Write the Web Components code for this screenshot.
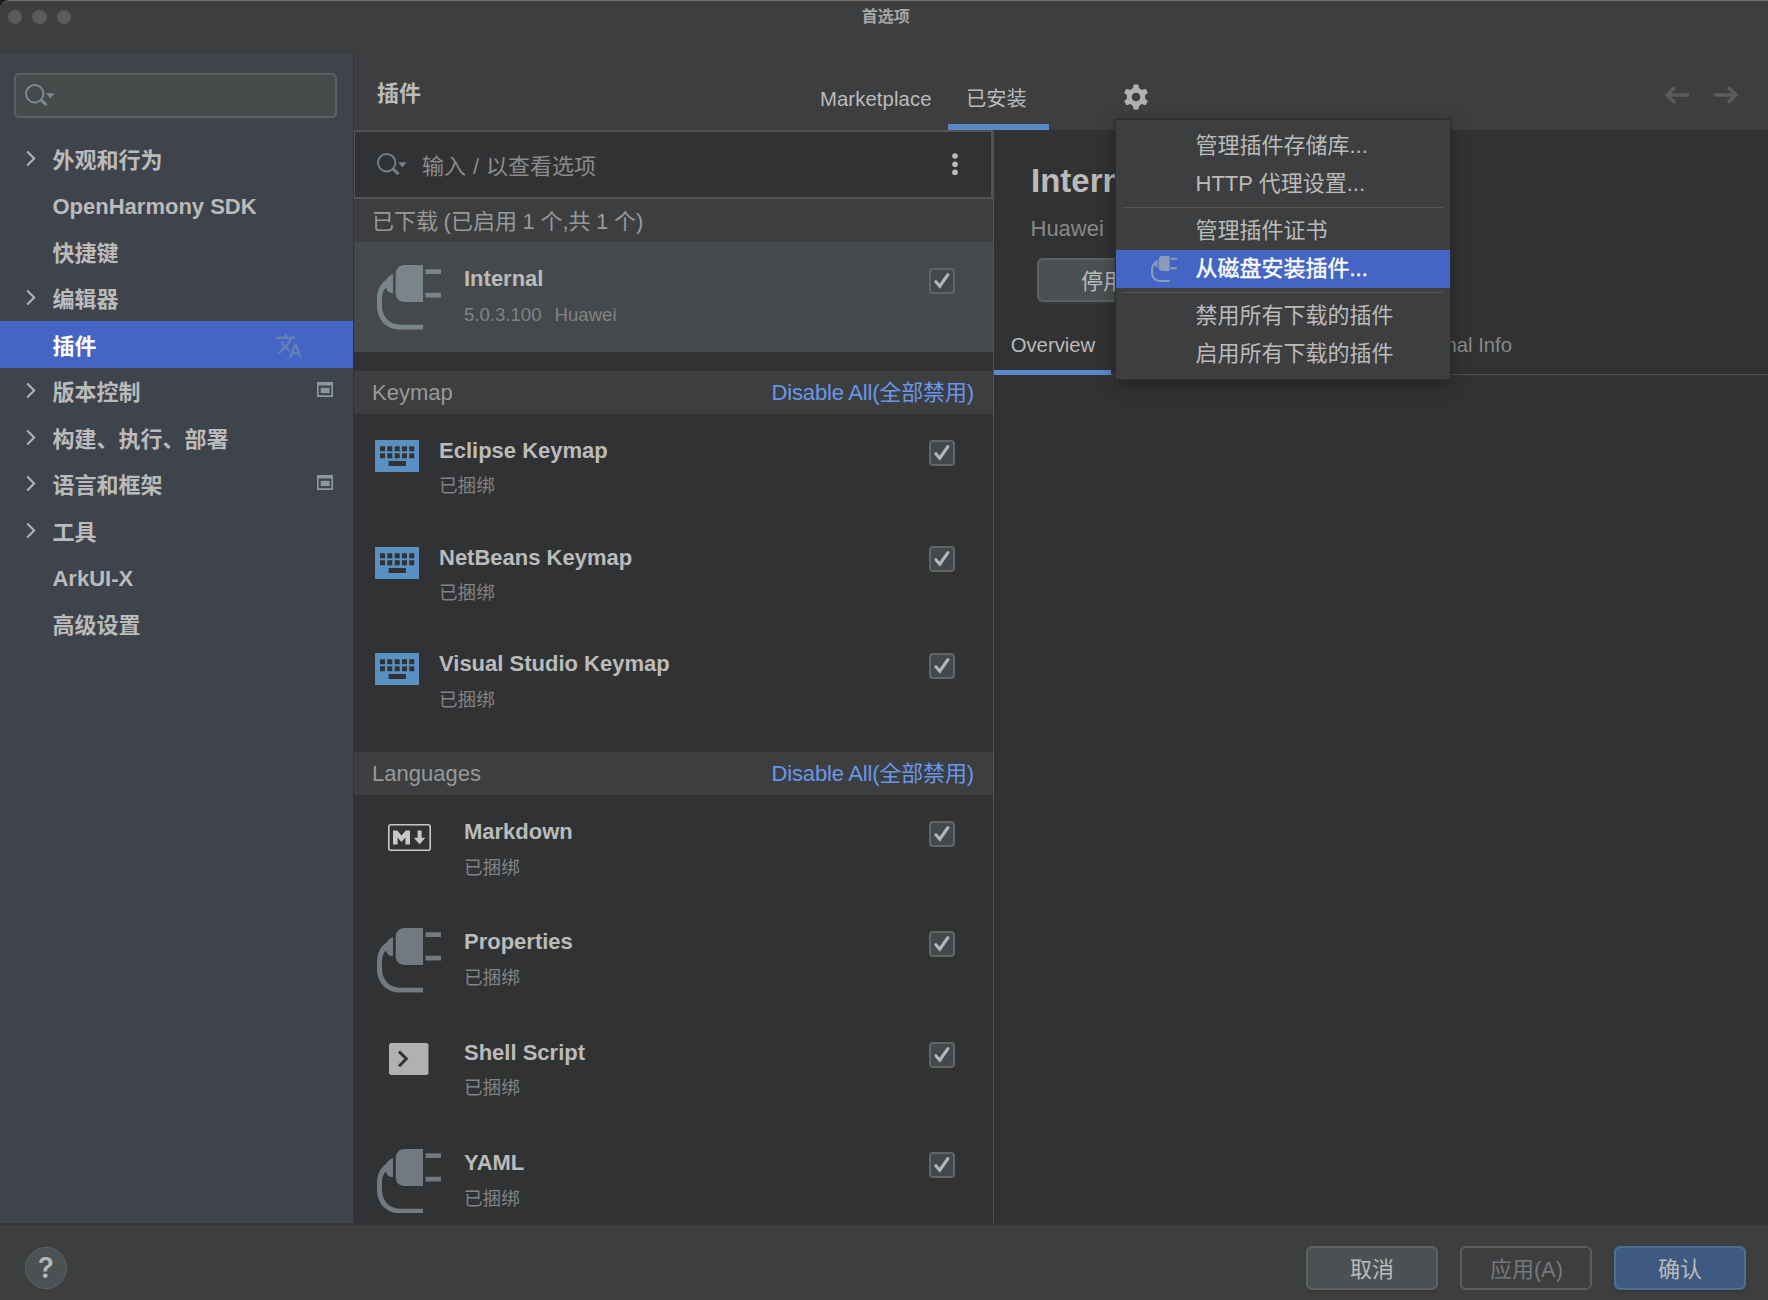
<!DOCTYPE html>
<html lang="zh-CN">
<head>
<meta charset="utf-8">
<title>首选项</title>
<style>
html,body{margin:0;padding:0;background:#1b1c1d}
body{width:1768px;height:1300px;overflow:hidden;font-family:"Liberation Sans","Noto Sans CJK SC",sans-serif;font-size:22px;color:#bbbbbb}
</style>
</head>
<body>
<prefs-window></prefs-window>
<script>
const define = (name, html) => {
  const t = document.createElement('template');
  t.innerHTML = html;
  customElements.define(name, class extends HTMLElement {
    constructor() {
      super();
      this.attachShadow({mode: 'open'}).appendChild(t.content.cloneNode(true));
    }
  });
};

/* ---------- icons ---------- */
const ICONS = {
  plug: ['0 0 64.5 64.5', '<path fill="currentColor" d="M27.700 0H46V37H27.700C22 37 18.700 33 18.700 28V9C18.700 4 22 0 27.700 0ZM48.500 4.200h16v4.800h-16ZM48.500 27.800h16v4.800h-16ZM16 9V28C12 28 9.500 26 9 22.500C6 25 5 29 5 34V41C5 52 13 59.700 23 59.700H46V64.500H23C9 64.500 0 54 0 41V34C0 25 4 18 9 15C11 12 13 10 16 9Z"/>'],
  keyboard: ['0 0 44.500 32', '<path fill="#5992c2" d="M0 0h44.500v32H0z"/><g fill="#313234"><path d="M5 6.300h5v5h-5zM12.300 6.300h5v5h-5zM19.700 6.300h5v5h-5zM27 6.300h5v5h-5zM34.300 6.300h5v5h-5zM5 13.300h5v5h-5zM12.300 13.300h5v5h-5zM19.700 13.300h5v5h-5zM27 13.300h5v5h-5zM34.300 13.300h5v5h-5zM13.600 21h17.300v5h-17.300z"/></g>'],
  markdown: ['0 0 43 27', '<rect x=".8" y=".8" width="41.400" height="25.400" rx="2" fill="none" stroke="#c6c7c8" stroke-width="1.600"/><path fill="#c6c7c8" d="M5 20.500V6.500h4.300l4.200 5 4.200-5H22v14h-4.600v-7l-3.900 4.400-3.900-4.400v7zM29.600 6.500h4v7.300h3.800l-5.800 6.400-5.800-6.400h3.800z"/>'],
  shell: ['0 0 39.500 32', '<rect width="39.500" height="32" rx="2.500" fill="#afb1b3"/><path d="M10 8.500l7.300 7.300L10 23.200" fill="none" stroke="#313234" stroke-width="3"/>'],
  search: ['0 0 30 23', '<circle cx="9.700" cy="9.700" r="8.700" fill="none" stroke="currentColor" stroke-width="2"/><path d="M15.200 15.200l6.300 6" stroke="currentColor" stroke-width="3"/><path d="M21 9.200h8.500l-4.250 5.300z" fill="currentColor"/>'],
  chevron: ['0 0 10 18', '<path d="M1 1.500L8.300 9 1 16.500" fill="none" stroke="currentColor" stroke-width="2.200"/>'],
  project: ['0 0 16 15', '<path fill="#8997a0" fill-rule="evenodd" d="M0 0h16v15H0zM1.700 3.600v9.700h12.600V3.600z"/><path fill="#8997a0" d="M3.700 5.800h8.900v5.300H3.700z"/>'],
  translate: ['1 2 22 20', '<path fill="currentColor" d="M12.870 15.070l-2.540-2.510.03-.03c1.740-1.940 2.980-4.170 3.710-6.530H17V4h-7V2H8v2H1v1.990h11.170C11.500 7.920 10.440 9.750 9 11.350 8.070 10.320 7.300 9.190 6.690 8h-2c.73 1.630 1.730 3.170 2.980 4.560l-5.090 5.020L4 19l5-5 3.110 3.110.76-2.040zM18.500 10h-2L12 22h2l1.120-3h4.750L21 22h2l-4.500-12zm-2.620 7l1.620-4.330L19.120 17h-3.240z"/>'],
  gear: ['-13 -13 26 26', '<g fill="#afb1b3"><path fill-rule="evenodd" d="M0-9.200A9.200 9.200 0 1 1 0 9.200A9.200 9.200 0 1 1 0-9.200ZM0-4.300A4.300 4.300 0 1 0 0 4.300A4.300 4.300 0 1 0 0-4.300Z"/>' + [0,60,120,180,240,300].map(a => `<path transform="rotate(${a})" d="M-2.300-12.400h4.600l1.200 5h-7z"/>`).join('') + '</g>'],
  dots: ['0 0 6 22', '<g fill="#bbbcbd"><circle cx="3" cy="3" r="2.800"/><circle cx="3" cy="11.200" r="2.800"/><circle cx="3" cy="19.400" r="2.800"/></g>'],
  back: ['0 0 24 18', '<path d="M24 9H2.500M10 1.300L2 9l8 7.700" fill="none" stroke="#5a5b5c" stroke-width="3.600"/>'],
  forward: ['0 0 24 18', '<path d="M0 9h21.500M14 1.300L22 9l-8 7.700" fill="none" stroke="#5a5b5c" stroke-width="3.600"/>']
};
customElements.define('ui-icon', class extends HTMLElement {
  connectedCallback() {
    const [box, body] = ICONS[this.getAttribute('name')];
    const w = this.getAttribute('w'), h = this.getAttribute('h');
    this.attachShadow({mode: 'open'}).innerHTML =
      `<style>:host{display:block;flex:none;width:${w}px;height:${h}px}svg{display:block}</style>
       <svg width="${w}" height="${h}" viewBox="${box}">${body}</svg>`;
  }
});

define('check-box', `<style>
:host{display:flex;box-sizing:border-box;flex:none;width:26px;height:26px;border:2px solid #626465;border-radius:4px;background:#43494a}
svg{display:block;margin:-2px}
</style><svg width="26" height="26" viewBox="0 0 26 26"><path d="M6.900 13.700l3.900 4.500L18.900 6.700" fill="none" stroke="#b4b5b6" stroke-width="3.200" stroke-linecap="round" stroke-linejoin="miter"/></svg>`);

define('push-button', `<style>
:host{display:flex;align-items:center;justify-content:center;box-sizing:border-box;width:132px;height:44px;border:2px solid #5e6162;border-radius:6px;background:#4b5052;color:#bbbbbb;line-height:32px;padding-top:3px;box-shadow:0 2px 2px #36383a}
:host([kind=disabled]){background:transparent;color:#777879;border-color:#5b5d5e;box-shadow:none;letter-spacing:-.1px;padding-left:1px}
:host([kind=primary]){background:#3f5a80;border-color:#4d6f94}
</style><slot></slot>`);

/* ---------- title bar ---------- */
define('title-bar', `<style>
:host{display:grid;grid-template-columns:1fr auto 1fr;height:54px;box-sizing:border-box;border-top:1.500px solid #717374;border-radius:9px 0 0 0;background:#3d3e40}
.dots{display:flex;gap:9.900px;padding:8.800px 0 0 7.600px}
i{width:14.600px;height:14.600px;border-radius:50%;background:#5a5b5c}
b{font-size:16px;line-height:20px;padding:6px 0 0 3.500px;color:#a5a6a7}
</style><div class="dots"><i></i><i></i><i></i></div><b>首选项</b>`);

/* ---------- sidebar ---------- */
customElements.define('nav-item', class extends HTMLElement {
  connectedCallback() {
    const mark = this.getAttribute('mark');
    this.attachShadow({mode: 'open'}).innerHTML = `<style>
:host{display:flex;align-items:center;height:46.500px;box-sizing:border-box;padding:0 20px 0 26.200px;font-weight:bold}
:host([selected]){background:#4565c4;color:#fff;padding-right:51.500px}
.tw{width:26.300px;color:#b0b2b4}
span{flex:1;line-height:32px;padding-top:${/^[\x00-\x7f]+$/.test(this.textContent) ? 4 : 5}px}
.tr{color:#6480b5;margin-top:3px}
ui-icon[name=project]{margin-top:-2px}
</style><div class="tw">${this.hasAttribute('open') ? '<ui-icon name="chevron" w="10" h="17"></ui-icon>' : ''}</div>
<span><slot></slot></span>
${mark === 'project' ? '<ui-icon name="project" w="16" h="15"></ui-icon>' : ''}
${mark === 'translate' ? '<ui-icon class="tr" name="translate" w="26" h="24"></ui-icon>' : ''}`;
  }
});
define('side-bar', `<style>
:host{display:block;box-sizing:border-box;width:354px;border-right:1px solid #323335;background:#3f434c;padding-top:19px}
.search{box-sizing:border-box;width:323px;height:44.500px;margin:0 0 17.500px 14px;border:2px solid #5e6060;border-radius:5px;background:#454a4a;padding:9px 0 0 8.500px;color:#7c8892}
</style>
<div class="search"><ui-icon name="search" w="30" h="23"></ui-icon></div>
<nav-item open>外观和行为</nav-item>
<nav-item>OpenHarmony SDK</nav-item>
<nav-item>快捷键</nav-item>
<nav-item open>编辑器</nav-item>
<nav-item selected mark="translate">插件</nav-item>
<nav-item open mark="project">版本控制</nav-item>
<nav-item open>构建、执行、部署</nav-item>
<nav-item open mark="project">语言和框架</nav-item>
<nav-item open>工具</nav-item>
<nav-item>ArkUI-X</nav-item>
<nav-item>高级设置</nav-item>`);

/* ---------- header ---------- */
define('plugins-header', `<style>
:host{display:flex;height:76px;background:#3d3e40;box-sizing:border-box;padding-left:23px}
b{width:424px;line-height:32px;padding-top:24px}
.tab{font-size:20.300px;line-height:30px;padding:30px 18px 0 18px;box-sizing:border-box;height:75.500px}
.mk{letter-spacing:.1px;width:147px;padding-left:19px}
.on{border-bottom:6px solid #5a88c4;width:101px}
.gear{padding:30px 0 0 74px}
.nav{display:flex;gap:25px;margin-left:auto;padding:31.500px 30.500px 0 0}
</style><b>插件</b><div class="tab mk">Marketplace</div><div class="tab on">已安装</div>
<div class="gear"><ui-icon name="gear" w="26" h="26"></ui-icon></div>
<div class="nav"><ui-icon name="back" w="24" h="18"></ui-icon><ui-icon name="forward" w="24" h="18"></ui-icon></div>`);

/* ---------- plugin list ---------- */
define('list-search', `<style>
:host{display:flex;box-sizing:border-box;height:69px;border:2px solid #505254;border-left-width:1px;background:#313234;padding:0 33px 0 22px;color:#8b8c8d}
.ic{width:45px;color:#72808a;padding-top:21px}
span{flex:1;line-height:32px;padding-top:19px;word-spacing:.8px}
.d{padding-top:21px}
</style><div class="ic"><ui-icon name="search" w="30" h="23"></ui-icon></div><span>输入 / 以查看选项</span><div class="d"><ui-icon name="dots" w="6" h="22"></ui-icon></div>`);

define('group-header', `<style>
:host{display:flex;justify-content:space-between;align-items:center;height:43px;box-sizing:border-box;background:#3d3e40;color:#98999a;padding:2px 19px 0 18px;line-height:32px;word-spacing:-.5px}
::slotted(a){color:#6897ea;letter-spacing:-.14px}
</style><slot></slot>`);

customElements.define('plugin-row', class extends HTMLElement {
  connectedCallback() {
    const kind = this.getAttribute('icon');
    const [w, h, l, t] = {plug: [64.5, 64.5, 22.7, 23], keyboard: [44.5, 32, 20.5, 26.5], markdown: [43, 27, 34, 29.5], shell: [39.5, 32, 35, 27.3]}[kind];
    const small = kind === 'keyboard';
    this.attachShadow({mode: 'open'}).innerHTML = `<style>
:host{display:flex;box-sizing:border-box;height:${small ? 106.6 : 110.4}px;padding-right:38.500px}
:host([selected]){background:#45494b}
.ic{box-sizing:border-box;width:${small ? 85 : 110}px;padding:${t}px 0 0 ${l}px;color:#727980}
:host([selected]) .ic{color:#7a858b}
.tx{flex:1;padding-top:21.300px}
b{display:block;line-height:32px}
.sub{display:flex;gap:13px;font-size:18.600px;line-height:28px;padding-top:5.500px;color:#818283}
check-box{margin-top:26px}
</style><div class="ic"><ui-icon name="${kind}" w="${w}" h="${h}"></ui-icon></div>
<div class="tx"><b><slot></slot></b><div class="sub">${this.getAttribute('sub').split('|').map(s => `<span>${s}</span>`).join('')}</div></div>
<check-box></check-box>`;
  }
});

define('plugin-list', `<style>
:host{display:flex;flex-direction:column;box-sizing:border-box;width:640px;border-right:1px solid #515355;overflow:hidden}
.gap{height:18.300px;flex:none}
group-header,plugin-row,list-search{flex:none}
</style>
<list-search></list-search>
<group-header>已下载 (已启用 1 个,共 1 个)</group-header>
<plugin-row selected icon="plug" sub="5.0.3.100|Huawei">Internal</plugin-row>
<div class="gap"></div>
<group-header><span>Keymap</span><a>Disable All(全部禁用)</a></group-header>
<plugin-row icon="keyboard" sub="已捆绑">Eclipse Keymap</plugin-row>
<plugin-row icon="keyboard" sub="已捆绑">NetBeans Keymap</plugin-row>
<plugin-row icon="keyboard" sub="已捆绑">Visual Studio Keymap</plugin-row>
<div class="gap"></div>
<group-header><span>Languages</span><a>Disable All(全部禁用)</a></group-header>
<plugin-row icon="markdown" sub="已捆绑">Markdown</plugin-row>
<plugin-row icon="plug" sub="已捆绑">Properties</plugin-row>
<plugin-row icon="shell" sub="已捆绑">Shell Script</plugin-row>
<plugin-row icon="plug" sub="已捆绑">YAML</plugin-row>`);

/* ---------- details ---------- */
define('plugin-details', `<style>
:host{display:block;flex:1}
h1{margin:0;font-size:33px;line-height:44px;padding:29px 0 0 37px}
.v{color:#87898a;line-height:32px;padding:10px 0 0 36.500px}
push-button{margin:13px 0 0 43px}
.tabs{display:flex;justify-content:space-between;box-sizing:border-box;height:73px;border-bottom:1px solid #505254;font-size:20.300px;line-height:30px}
.t{padding:27.500px 16px 0 16.700px;height:44.500px;box-sizing:border-box}
.on{height:72.500px;border-bottom:5px solid #5a88c8;margin-bottom:-1px}
.off{color:#87898a;padding-right:256px}
</style><h1>Internal</h1><div class="v">Huawei</div><push-button>停用</push-button>
<div class="tabs"><div class="t on">Overview</div><div class="t off">Additional Info</div></div>`);

/* ---------- popup menu ---------- */
customElements.define('menu-item', class extends HTMLElement {
  connectedCallback() {
    this.attachShadow({mode: 'open'}).innerHTML = `<style>
:host{display:flex;align-items:center;height:38.100px;line-height:34px}
:host([selected]){background:#4565c4;color:#fff;-webkit-text-stroke:.4px #fff}
.ic{width:44.500px;padding-left:35px;color:#8c9cb8}
</style><div class="ic">${this.hasAttribute('selected') ? '<ui-icon name="plug" w="26" h="26"></ui-icon>' : ''}</div><slot></slot>`;
  }
});
define('gear-menu', `<style>
:host{display:block;position:absolute;left:1116px;top:120px;box-sizing:border-box;width:334px;height:259px;padding-top:6.800px;background:#3d3e40;box-shadow:0 0 1px 1px #2c2d2f,0 5px 18px rgba(0,0,0,.35)}
hr{border:0;height:1.500px;margin:3.700px 6px 3.500px;background:#515355}
</style>
<menu-item>管理插件存储库...</menu-item>
<menu-item>HTTP 代理设置...</menu-item>
<hr>
<menu-item>管理插件证书</menu-item>
<menu-item selected>从磁盘安装插件...</menu-item>
<hr>
<menu-item>禁用所有下载的插件</menu-item>
<menu-item>启用所有下载的插件</menu-item>`);

/* ---------- footer ---------- */
define('dialog-footer', `<style>
:host{display:flex;box-sizing:border-box;height:77px;border-top:2px solid #323335;background:#3d3e40;padding:21px 22px 0 25px;gap:22px}
.help{box-sizing:border-box;width:42px;height:42px;margin:1px auto 0 0;border:1.500px solid #5e6162;border-radius:50%;background:#4b5052;display:flex;align-items:center;justify-content:center;font:600 29px/40px Inter,"Liberation Sans",sans-serif;color:#b4b5b6}
</style><div class="help">?</div><push-button>取消</push-button><push-button kind="disabled">应用(A)</push-button><push-button kind="primary">确认</push-button>`);

/* ---------- window ---------- */
define('prefs-window', `<style>
:host{display:flex;flex-direction:column;position:relative;width:1768px;height:1300px;overflow:hidden}
.body{display:flex;flex:1;min-height:0}
.main{flex:1;display:flex;flex-direction:column;min-width:0;background:#313234}
.cols{display:flex;flex:1;min-height:0}
</style>
<title-bar></title-bar>
<div class="body"><side-bar></side-bar>
<div class="main"><plugins-header></plugins-header><div class="cols"><plugin-list></plugin-list><plugin-details></plugin-details></div></div></div>
<dialog-footer></dialog-footer>
<gear-menu></gear-menu>`);
</script>
</body>
</html>
